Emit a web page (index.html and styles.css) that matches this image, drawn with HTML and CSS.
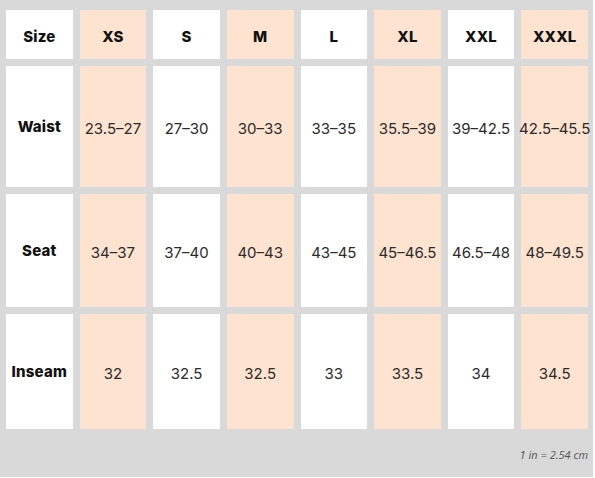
FILE: index.html
```html
<!DOCTYPE html>
<html>
<head>
<meta charset="utf-8">
<link rel="stylesheet" href="styles.css">
</head>
<body>
<div class="chart">
  <div class="grid">
    <div class="cell head">Size</div>
    <div class="cell head peach">XS</div>
    <div class="cell head">S</div>
    <div class="cell head peach">M</div>
    <div class="cell head">L</div>
    <div class="cell head peach">XL</div>
    <div class="cell head">XXL</div>
    <div class="cell head peach">XXXL</div>

    <div class="cell label">Waist</div>
    <div class="cell val peach">23.5–27</div>
    <div class="cell val">27–30</div>
    <div class="cell val peach">30–33</div>
    <div class="cell val">33–35</div>
    <div class="cell val peach">35.5–39</div>
    <div class="cell val">39–42.5</div>
    <div class="cell val peach">42.5–45.5</div>

    <div class="cell label">Seat</div>
    <div class="cell val peach">34–37</div>
    <div class="cell val">37–40</div>
    <div class="cell val peach">40–43</div>
    <div class="cell val">43–45</div>
    <div class="cell val peach">45–46.5</div>
    <div class="cell val">46.5–48</div>
    <div class="cell val peach">48–49.5</div>

    <div class="cell label">Inseam</div>
    <div class="cell val peach">32</div>
    <div class="cell val">32.5</div>
    <div class="cell val peach">32.5</div>
    <div class="cell val">33</div>
    <div class="cell val peach">33.5</div>
    <div class="cell val">34</div>
    <div class="cell val peach">34.5</div>
  </div>
  <div class="note">1 in = 2.54 cm</div>
</div>
</body>
</html>
```
FILE: styles.css
```css
html, body {
  margin: 0;
  padding: 0;
  background: #ffffff;
}
.chart {
  width: 593px;
  height: 477px;
  box-sizing: border-box;
  background: #d9d9d9;
  padding: 10px 5px 0 6px;
  font-family: "Inter", "Liberation Sans", sans-serif;
}
.grid {
  width: 582px;
  display: grid;
  grid-template-columns: repeat(8, minmax(0, 1fr));
  grid-template-rows: 49px 121px 113px 115px;
  column-gap: 7px;
  row-gap: 7px;
}
.cell {
  background: #ffffff;
  display: flex;
  align-items: center;
  justify-content: center;
  white-space: nowrap;
  min-width: 0;
}
.cell.peach {
  background: #fde3d0;
}
.head, .label {
  font-weight: 800;
  font-size: 15px;
  color: #111111;
  letter-spacing: 0.2px;
}
.head {
  padding-top: 3px;
}
.val {
  font-size: 15px;
  color: #2b2b2b;
  font-weight: 400;
  letter-spacing: 0;
  padding-top: 3px;
}
.note {
  text-align: right;
  font-family: "Open Sans", "Liberation Sans", sans-serif;
  font-style: italic;
  font-size: 11px;
  color: #555555;
  padding-right: 0;
  margin-top: 18px;
}
```
